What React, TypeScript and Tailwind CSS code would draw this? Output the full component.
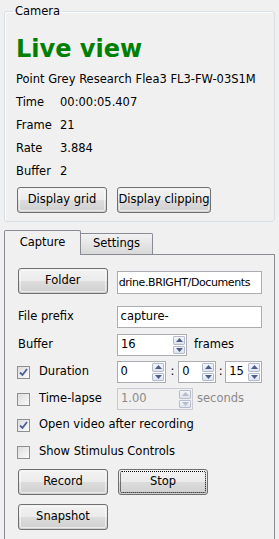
import React from 'react';

const font = "font-['Tahoma','DejaVu_Sans',sans-serif]";

// Win7-style push button
const Btn = ({ label, w = 'w-[90px]', focus = false }: { label: string; w?: string; focus?: boolean }) => (
  <div
    className={`${w} h-[26px] rounded-[3px] border border-[#707070] bg-[linear-gradient(#f2f2f2_0%,#ebebeb_50%,#dddddd_50%,#cfcfcf_100%)] p-[1px]`}
  >
    <div
      className={`h-full rounded-[2px] flex items-center justify-center whitespace-nowrap ${
        focus ? 'border border-dotted border-black' : 'border border-[#fcfcfc]/60'
      }`}
    >
      {label}
    </div>
  </div>
);

const Arrow = ({ up, disabled }: { up?: boolean; disabled?: boolean }) => (
  <div className="flex-1 flex items-center justify-center bg-[linear-gradient(#f4f6fa,#dde3ee)] border border-[#b4bccd] rounded-[1px]">
    <svg width="7" height="4" viewBox="0 0 7 4">
      <path
        d={up ? 'M0 4 L3.5 0 L7 4 Z' : 'M0 0 L3.5 4 L7 0 Z'}
        fill={disabled ? '#b8bcc4' : '#4c5e88'}
      />
    </svg>
  </div>
);

const Spin = ({ value, w, disabled = false }: { value: string; w: string; disabled?: boolean }) => (
  <div
    className={`${w} h-[22px] flex border ${
      disabled ? 'border-[#c8ccd2] bg-[#f0f0f0] text-[#8a8a8a]' : 'border-[#abadb3] bg-white'
    }`}
  >
    <div className="flex-1 flex items-center pl-[3px] overflow-hidden">{value}</div>
    <div className="w-[13px] flex flex-col gap-[1px] py-[1px] pr-[1px]">
      <Arrow up disabled={disabled} />
      <Arrow disabled={disabled} />
    </div>
  </div>
);

const Check = ({ checked, label }: { checked?: boolean; label: string }) => (
  <div className="flex items-center h-[20px]">
    <div className="w-[13px] h-[13px] border border-[#8e8f8f] bg-[linear-gradient(135deg,#dcdcdc,#fbfbfb)] p-[1px] flex items-center justify-center">
      {checked && (
        <svg width="9" height="9" viewBox="0 0 9 9">
          <path d="M1 4.5 L3.5 7 L8 1" stroke="#4a5f97" strokeWidth="1.8" fill="none" />
        </svg>
      )}
    </div>
    <span className="ml-[9px]">{label}</span>
  </div>
);

export default function App() {
  return (
    <div className={`w-[279px] h-[539px] bg-[#f0f0f0] overflow-hidden text-[11.5px] text-black leading-none ${font}`}>
      {/* Camera group */}
      <fieldset className="mx-[4px] mt-[4px] h-[218px] border border-[#d5dfe5] rounded-[3px] px-[11px] shadow-[inset_1px_1px_0_#fff]">
        <legend className="-ml-[3px] px-[2px] leading-[14px]">Camera</legend>
        <div className="text-[24px] font-bold text-[#008000] mt-[19px] leading-[24px]">Live view</div>
        <div className="mt-[7px] h-[23px] flex items-center">Point Grey Research Flea3 FL3-FW-03S1M</div>
        <div className="grid grid-cols-[44px_1fr] auto-rows-[23px] items-center">
          <span>Time</span>
          <span>00:00:05.407</span>
          <span>Frame</span>
          <span>21</span>
          <span>Rate</span>
          <span>3.884</span>
          <span>Buffer</span>
          <span>2</span>
        </div>
        <div className="flex gap-[10px] mt-[4px] ml-[1px]">
          <Btn label="Display grid" />
          <Btn label="Display clipping" w="w-[94px]" />
        </div>
      </fieldset>

      {/* Tabs */}
      <div className="mx-[4px] mt-[7px]">
        <div className="flex items-end h-[25px]">
          <div className="w-[77px] h-[25px] border border-b-0 border-[#898c95] bg-[#f0f0f0] rounded-t-[2px] flex items-center justify-center relative top-[1px] z-10">
            Capture
          </div>
          <div className="w-[72px] h-[21px] border border-l-0 border-b-0 border-[#898c95] bg-[linear-gradient(#f2f2f2,#d9d9d9)] rounded-tr-[2px] flex items-center justify-center">
            Settings
          </div>
        </div>
        <div className="h-[290px] border border-[#898c95] pl-[13px] pr-[12px] pt-[13px]">
          <div className="flex items-end gap-[9px]">
            <Btn label="Folder" />
            <div className="w-[146px] h-[23px] border border-[#abadb3] bg-white flex items-center pl-[1px] overflow-hidden">
              <span className="whitespace-nowrap tracking-[-0.4px] text-[11px]">drine.BRIGHT/Documents</span>
            </div>
          </div>
          <div className="flex items-center mt-[12px]">
            <span className="w-[99px]">File prefix</span>
            <div className="w-[146px] h-[22px] border border-[#abadb3] bg-white flex items-center pl-[3px]">capture-</div>
          </div>
          <div className="flex items-center mt-[6px]">
            <span className="w-[99px]">Buffer</span>
            <Spin value="16" w="w-[70px]" />
            <span className="ml-[7px]">frames</span>
          </div>
          <div className="flex items-center mt-[5px] -ml-[1px]">
            <div className="w-[100px]">
              <Check checked label="Duration" />
            </div>
            <Spin value="0" w="w-[50px]" />
            <span className="w-[12px] text-center">:</span>
            <Spin value="0" w="w-[38px]" />
            <span className="w-[9px] text-center">:</span>
            <Spin value="15" w="w-[37px]" />
          </div>
          <div className="flex items-center mt-[5px] -ml-[1px]">
            <div className="w-[100px]">
              <Check label="Time-lapse" />
            </div>
            <Spin value="1.00" w="w-[76px]" disabled />
            <span className="ml-[4px] text-[#8a8a8a]">seconds</span>
          </div>
          <div className="mt-[5px] -ml-[1px]">
            <Check checked label="Open video after recording" />
          </div>
          <div className="mt-[7px] -ml-[1px]">
            <Check label="Show Stimulus Controls" />
          </div>
          <div className="flex gap-[10px] mt-[7px]">
            <Btn label="Record" />
            <Btn label="Stop" focus />
          </div>
          <div className="mt-[9px]">
            <Btn label="Snapshot" />
          </div>
        </div>
      </div>
    </div>
  );
}
